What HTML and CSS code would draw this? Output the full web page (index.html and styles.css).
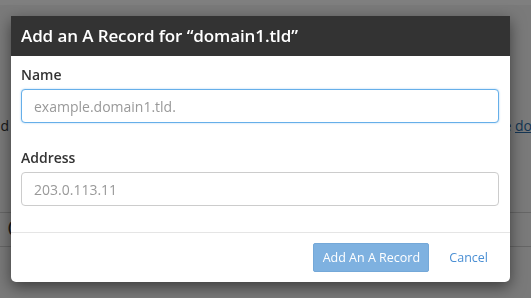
FILE: index.html
```html
<!DOCTYPE html>
<html>
<head>
<meta charset="utf-8">
<title>Zone Editor</title>
<link rel="stylesheet" href="styles.css">
</head>
<body>
    <div class="page">
        <div class="page-top"></div>
        <div class="page-text">
            <span>dd</span>
            <span>see the <a href="#">documentation</a></span>
        </div>
        <div class="page-table">
            <div class="page-row">(</div>
        </div>
    </div>

    <div class="backdrop"></div>

    <div class="modal">
        <div class="modal-header">Add an A Record for “domain1.tld”</div>
        <form class="modal-body">
            <div class="form-group">
                <label for="recordName">Name</label>
                <input type="text" id="recordName" class="form-control focused" placeholder="example.domain1.tld.">
            </div>
            <div class="form-group">
                <label for="recordAddress">Address</label>
                <input type="text" id="recordAddress" class="form-control" placeholder="203.0.113.11">
            </div>
        </form>
        <div class="modal-footer">
            <button type="button" class="btn-primary" disabled>Add An A Record</button>
            <a href="#" class="btn-link">Cancel</a>
        </div>
    </div>
</body>
</html>
```

FILE: styles.css
```css
:root {
    --text-color: #333;
    --primary-color: #7eb1e0;
    --link-color: #4a8fd4;
    --border-color: #ccc;
    --focus-color: #66afe9;
}

html, body {
    margin: 0;
    padding: 0;
}

body {
    font-family: 'Open Sans', 'Liberation Sans', sans-serif;
    font-size: 14px;
    color: var(--text-color);
    background-color: #f4f4f4;
    width: 531px;
    height: 298px;
    overflow: hidden;
}

.page {
    overflow: hidden;
}

.page-top {
    height: 5px;
    background-color: #fff;
}

.page-text {
    display: flex;
    justify-content: space-between;
    margin: 111px -84px 0 -8px;
    white-space: nowrap;
    line-height: 20px;
}

.page-text a {
    color: #2a6ca8;
}

.page-table {
    margin-top: 76px;
    border-top: 1px solid #ccc;
    border-bottom: 1px solid #ccc;
    height: 33px;
}

.page-row {
    padding: 4px 0 0 8px;
    font-weight: 700;
}

.backdrop {
    position: fixed;
    inset: 0;
    background-color: rgba(0, 0, 0, 0.5);
}

.modal {
    position: absolute;
    top: 16px;
    left: 11px;
    width: 499px;
    background-color: #fff;
    border-radius: 0 0 5px 5px;
    box-shadow: 0 5px 15px rgba(0, 0, 0, 0.5);
}

.modal-header {
    height: 40px;
    line-height: 40px;
    padding: 0 10px;
    background-color: #333;
    color: #fff;
    font-size: 17px;
    font-weight: 600;
    letter-spacing: -0.1px;
}

.modal-body {
    margin: 0;
    padding: 9px 11px 0 10px;
    border-bottom: 1px solid #e5e5e5;
}

.form-group {
    margin-bottom: 25px;
}

.form-group:last-child {
    margin-bottom: 26px;
}

label {
    display: block;
    height: 20px;
    line-height: 20px;
    margin-bottom: 4px;
    font-weight: 600;
}

.form-control {
    display: block;
    width: 100%;
    height: 34px;
    box-sizing: border-box;
    padding: 6px 12px;
    font-family: inherit;
    font-size: 14px;
    color: var(--text-color);
    border: 1px solid var(--border-color);
    border-radius: 4px;
    outline: none;
}

.form-control::placeholder {
    color: #999;
}

.form-control.focused {
    border-color: var(--focus-color);
    box-shadow: 0 0 2px rgba(102, 175, 233, 0.6);
}

.modal-footer {
    display: flex;
    justify-content: flex-end;
    align-items: center;
    gap: 20px;
    padding: 10px 22px 10px 0;
}

.btn-primary {
    width: 116px;
    height: 29px;
    padding: 0;
    font-family: inherit;
    font-size: 12.5px;
    color: #fff;
    background-color: var(--primary-color);
    border: 1px solid #74a8d8;
    border-radius: 2px;
}

.btn-link {
    font-size: 12.5px;
    color: var(--link-color);
    text-decoration: none;
}
```
